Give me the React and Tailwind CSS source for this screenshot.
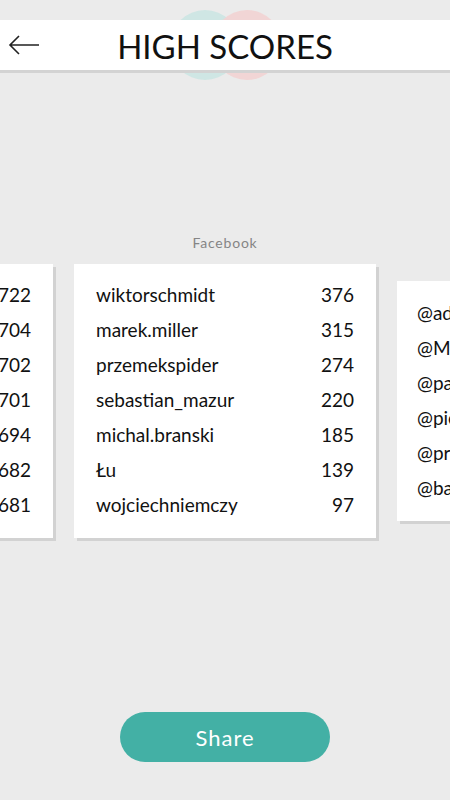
import React from "react";

const facebook = [
  ["wiktorschmidt", 376],
  ["marek.miller", 315],
  ["przemekspider", 274],
  ["sebastian_mazur", 220],
  ["michal.branski", 185],
  ["Łu", 139],
  ["wojciechniemczy", 97],
];

const global = [
  ["kasia.nowak", 722],
  ["tomasz.lis", 704],
  ["adam_k", 702],
  ["piotr.wolny", 701],
  ["ola.zielinska", 694],
  ["bartek99", 682],
  ["janek", 681],
];

const twitter = ["@adamnowak", "@Mateusz", "@pawel_k", "@piotrek", "@przemo", "@bartosz"];

function ScoreCard({ rows }) {
  return (
    <div className="w-[302px] h-[274px] shrink-0 bg-white shadow-[3px_3px_0_#d2d2d2] px-[22px] pt-[14px]">
      {rows.map(([name, score]) => (
        <div key={name} className="h-[35px] flex items-center justify-between">
          <span>{name}</span>
          <span>{score}</span>
        </div>
      ))}
    </div>
  );
}

export default function App() {
  return (
    <div
      className="w-[450px] h-[800px] bg-[#ebebeb] overflow-hidden relative text-[#111]"
      style={{ fontFamily: "Lato, 'Noto Sans', sans-serif" }}
    >
      {/* circles behind header */}
      <div className="absolute left-[170px] top-[10px] w-[70px] h-[70px] rounded-full bg-[#cfe6e4]" />
      <div className="absolute left-[212px] top-[10px] w-[70px] h-[70px] rounded-full bg-[#f2d3d3] opacity-90" />

      <div className="pt-[20px] relative">
        <div className="h-[53px] bg-white border-b-[3px] border-[#d3d3d3] flex items-center relative">
          <svg className="absolute left-[8px] top-[14px]" width="32" height="22" viewBox="0 0 32 22">
            <path d="M31 11H2M11 2L2 11l9 9" fill="none" stroke="#222" strokeWidth="1.6" />
          </svg>
          <div className="w-full text-center text-[33px] font-normal leading-none mt-[2px]">
            HIGH SCORES
          </div>
        </div>
      </div>

      <div className="mt-[163px] text-center text-[14px] tracking-[0.8px] text-[#858585] leading-none">Facebook</div>

      <div className="mt-[14px] flex justify-center items-start gap-[21px] text-[19px]">
        <ScoreCard rows={global} />
        <ScoreCard rows={facebook} />
        <div className="w-[302px] h-[240px] mt-[17px] shrink-0 bg-white shadow-[3px_3px_0_#d2d2d2] px-[20px] pt-[15px]">
          {twitter.map((t) => (
            <div key={t} className="h-[35px] flex items-center">
              {t}
            </div>
          ))}
        </div>
      </div>

      <div className="flex justify-center mt-[174px]">
        <button className="w-[210px] h-[50px] rounded-full bg-[#43b0a5] text-white text-[22px] tracking-[1px]">
          Share
        </button>
      </div>
    </div>
  );
}
